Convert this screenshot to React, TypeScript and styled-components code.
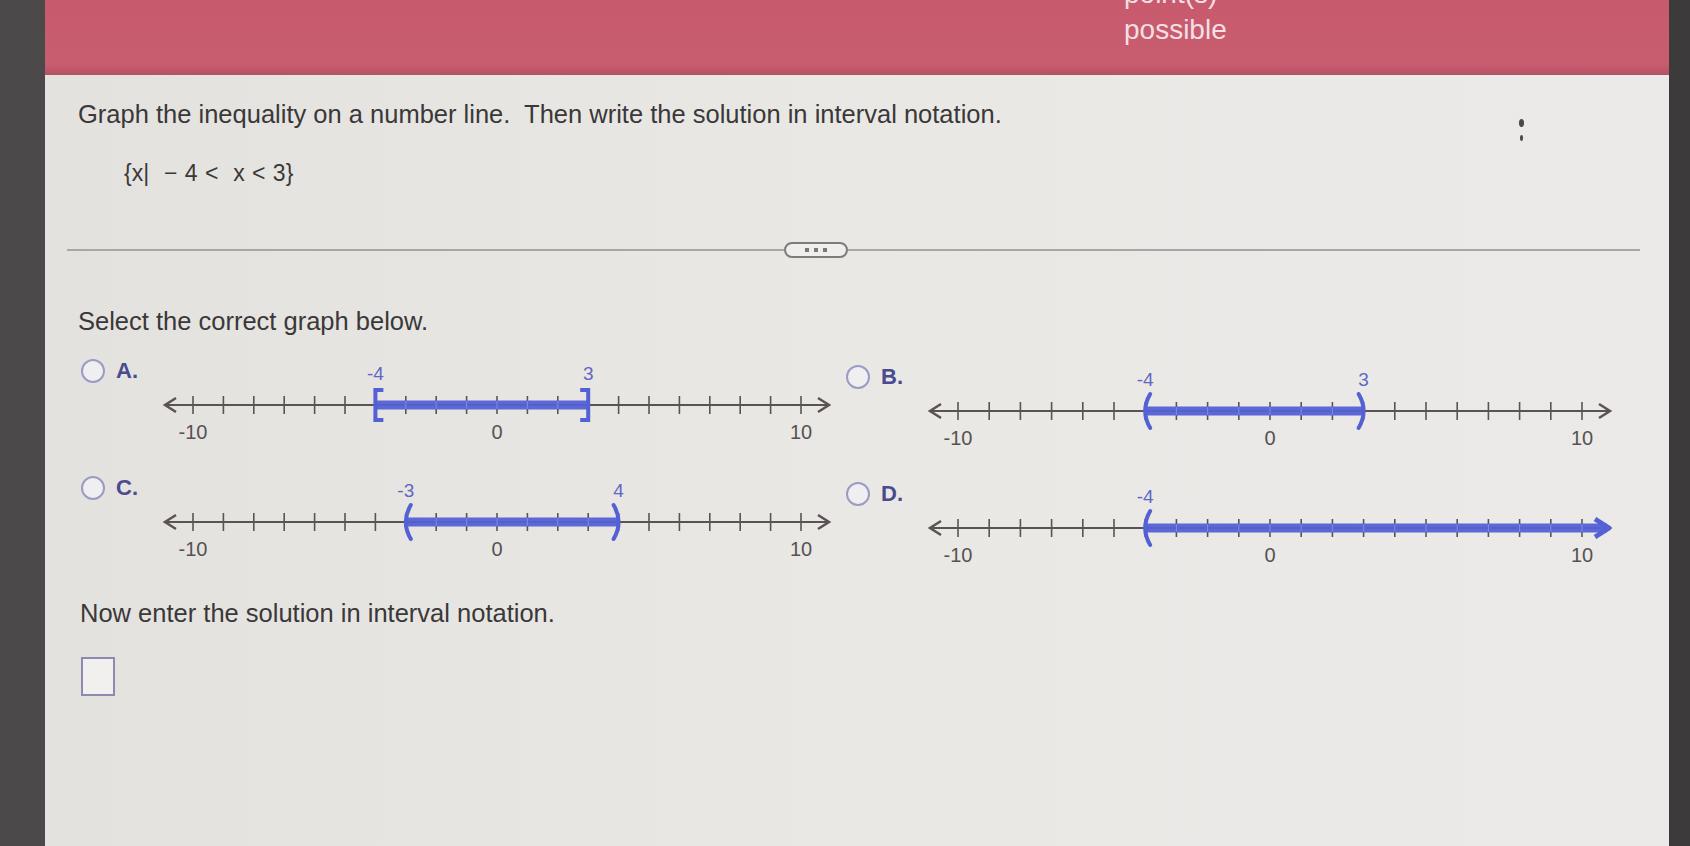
import React from "react";
import styled, { createGlobalStyle } from "styled-components";

const GlobalStyle = createGlobalStyle`
  html, body {
    margin: 0;
    padding: 0;
    background: #4a4848;
  }
  body {
    font-family: "Liberation Sans", Arial, sans-serif;
  }
`;

const Screen = styled.div`
  display: flex;
  width: 1690px;
  height: 846px;
  overflow: hidden;
`;

const Bezel = styled.div<{ $width: number; $color: string }>`
  flex: 0 0 ${(p) => p.$width}px;
  background: ${(p) => p.$color};
`;

const Main = styled.div`
  flex: 1;
  display: flex;
  flex-direction: column;
  min-width: 0;
`;

const Header = styled.header`
  flex: 0 0 75px;
  background: linear-gradient(180deg, #c75a6d 0%, #c95d70 85%, #b55163 100%);
  overflow: hidden;
  display: flex;
  padding-left: 1079px;
`;

// the header text is scrolled up, so only the bottom of "point(s)" shows
const HeaderText = styled.div`
  margin-top: -24px;
  color: #f4dfe4;
  font-size: 28px;
  line-height: 36px;
`;

const Content = styled.main`
  flex: 1;
  background: linear-gradient(90deg, #e4e2df 0%, #e9e8e5 50%, #ebeae8 100%);
  padding: 24px 29px 0 33px;
  color: #3a3838;
`;

const QuestionRow = styled.div`
  display: flex;
  justify-content: space-between;
  align-items: flex-start;
`;

const Text = styled.p`
  margin: 0;
  font-size: 25.5px;
  line-height: 30px;
  white-space: nowrap;
`;

const Dots = styled.div`
  display: flex;
  flex-direction: column;
  align-items: center;
  gap: 8px;
  margin: 20px 116px 0 0;
`;

const Dot = styled.span<{ $w: number; $h: number }>`
  width: ${(p) => p.$w}px;
  height: ${(p) => p.$h}px;
  border-radius: 50%;
  background: #4a4848;
`;

const SetNotation = styled.div`
  margin: 17px 0 0 46px;
  font-size: 23px;
  line-height: 30px;
  word-spacing: 1px;
`;

const Divider = styled.div`
  display: flex;
  align-items: center;
  height: 16px;
  margin: 54px 0 0 -11px;
`;

const Rule = styled.div<{ $width?: number }>`
  height: 2px;
  background: #a9a7a6;
  ${(p) => (p.$width ? `flex: 0 0 ${p.$width}px;` : "flex: 1;")}
`;

const MorePill = styled.button`
  flex: 0 0 64px;
  height: 16px;
  border: 2px solid #7d7b7c;
  border-radius: 8px;
  background: #efeeec;
  display: flex;
  align-items: center;
  justify-content: center;
  gap: 5px;
  padding: 0;
`;

const PillDot = styled.span`
  width: 4px;
  height: 4px;
  background: #7a7879;
`;

const SelectLabel = styled(Text)`
  margin-top: 48px;
`;

const Options = styled.div`
  display: grid;
  grid-template-columns: 765px 1fr;
  row-gap: 25px;
  margin: 23px 0 0 3px;
`;

const Option = styled.div<{ $shift: number }>`
  display: flex;
  align-items: flex-start;
  padding-top: ${(p) => p.$shift}px;
`;

const Choice = styled.label`
  flex: 0 0 81px;
  display: flex;
  align-items: center;
  gap: 11px;
  height: 24px;
`;

const Radio = styled.span`
  width: 20px;
  height: 20px;
  border-radius: 50%;
  border: 2px solid #9b9bc4;
  background: #efeff2;
`;

const Letter = styled.span`
  font-size: 22px;
  font-weight: bold;
  color: #4a4a8e;
`;

const EnterLabel = styled(Text)`
  margin: 30px 0 0 2px;
`;

const AnswerBox = styled.div`
  width: 30px;
  height: 35px;
  margin: 29px 0 0 3px;
  border: 2px solid #8c8aaf;
  background: #f1f0ee;
`;

type End = "bracket" | "paren" | "ray";

interface NumberLineProps {
  unit: number;
  from: number;
  to: number;
  left: End;
  right: End;
}

const AXIS = "#5b5353";
const BLUE = "#5361d4";

const NumberLine: React.FC<NumberLineProps> = ({ unit, from, to, left, right }) => {
  const pad = 31;
  const width = pad * 2 + unit * 20;
  const y = 46;
  const x = (v: number) => pad + (v + 10) * unit;
  const ticks = Array.from({ length: 21 }, (_, i) => i - 10);
  const endX = right === "ray" ? width - 6 : x(to);

  const endMark = (at: number, type: End, side: "l" | "r") => {
    const d = side === "l" ? 1 : -1;
    if (type === "bracket") {
      return (
        <path
          d={`M ${at + 8 * d} ${y - 15} L ${at} ${y - 15} L ${at} ${y + 15} L ${at + 8 * d} ${y + 15}`}
          fill="none"
          stroke={BLUE}
          strokeWidth={4}
        />
      );
    }
    if (type === "paren") {
      return (
        <path
          d={`M ${at + 5 * d} ${y - 17} Q ${at - 5 * d} ${y} ${at + 5 * d} ${y + 17}`}
          fill="none"
          stroke={BLUE}
          strokeWidth={4}
          strokeLinecap="round"
        />
      );
    }
    return (
      <path
        d={`M ${width - 18} ${y - 9} L ${width - 4} ${y} L ${width - 18} ${y + 9}`}
        fill="none"
        stroke={BLUE}
        strokeWidth={5}
        strokeLinejoin="round"
      />
    );
  };

  return (
    <svg width={width} height={86} viewBox={`0 0 ${width} 86`}>
      <line x1={3} y1={y} x2={width - 3} y2={y} stroke={AXIS} strokeWidth={2} />
      <path d={`M 14 ${y - 7} L 3 ${y} L 14 ${y + 7}`} fill="none" stroke={AXIS} strokeWidth={2.5} />
      <path
        d={`M ${width - 14} ${y - 7} L ${width - 3} ${y} L ${width - 14} ${y + 7}`}
        fill="none"
        stroke={AXIS}
        strokeWidth={2.5}
      />
      {ticks.map((t) => (
        <line key={t} x1={x(t)} y1={y - 9} x2={x(t)} y2={y + 9} stroke={AXIS} strokeWidth={1.6} />
      ))}
      <line x1={x(from)} y1={y} x2={endX} y2={y} stroke={BLUE} strokeWidth={9} strokeOpacity={0.95} />
      {ticks
        .filter((t) => t > from && (right === "ray" || t < to))
        .map((t) => (
          <line key={`b${t}`} x1={x(t)} y1={y - 4} x2={x(t)} y2={y + 4} stroke="#7b86e0" strokeWidth={1.2} />
        ))}
      {endMark(x(from), left, "l")}
      {endMark(endX, right, "r")}
      <g fontFamily="'Liberation Sans', Arial, sans-serif" fontSize={19} textAnchor="middle" fill="#6068c4">
        <text x={x(from)} y={21}>
          {from}
        </text>
        {right !== "ray" && (
          <text x={x(to)} y={21}>
            {to}
          </text>
        )}
      </g>
      <g fontFamily="'Liberation Sans', Arial, sans-serif" fontSize={20} textAnchor="middle" fill="#555253">
        <text x={x(-10)} y={80}>
          -10
        </text>
        <text x={x(0)} y={80}>
          0
        </text>
        <text x={x(10)} y={80}>
          10
        </text>
      </g>
    </svg>
  );
};

const options: Array<{ letter: string; unit: number; shift: number } & Omit<NumberLineProps, "unit">> = [
  { letter: "A", unit: 30.4, shift: 0, from: -4, to: 3, left: "bracket", right: "bracket" },
  { letter: "B", unit: 31.2, shift: 6, from: -4, to: 3, left: "paren", right: "paren" },
  { letter: "C", unit: 30.4, shift: 0, from: -3, to: 4, left: "paren", right: "paren" },
  { letter: "D", unit: 31.2, shift: 6, from: -4, to: 10, left: "paren", right: "ray" },
];

export default function App() {
  return (
    <>
      <GlobalStyle />
      <Screen>
        <Bezel $width={45} $color="#4b4949" />
        <Main>
          <Header>
            <HeaderText>
              point(s)
              <br />
              possible
            </HeaderText>
          </Header>
          <Content>
            <QuestionRow>
              <Text>Graph the inequality on a number line.&nbsp; Then write the solution in interval notation.</Text>
              <Dots>
                <Dot $w={5} $h={8} />
                <Dot $w={3} $h={6} />
              </Dots>
            </QuestionRow>
            <SetNotation>
              {"{x|"}&nbsp; − 4 &lt;&nbsp; x &lt; 3{"}"}
            </SetNotation>
            <Divider>
              <Rule $width={717} />
              <MorePill aria-label="more">
                <PillDot />
                <PillDot />
                <PillDot />
              </MorePill>
              <Rule />
            </Divider>
            <SelectLabel>Select the correct graph below.</SelectLabel>
            <Options>
              {options.map((o) => (
                <Option key={o.letter} $shift={o.shift}>
                  <Choice>
                    <Radio />
                    <Letter>{o.letter}.</Letter>
                  </Choice>
                  <NumberLine unit={o.unit} from={o.from} to={o.to} left={o.left} right={o.right} />
                </Option>
              ))}
            </Options>
            <EnterLabel>Now enter the solution in interval notation.</EnterLabel>
            <AnswerBox />
          </Content>
        </Main>
        <Bezel $width={21} $color="#3c3a3b" />
      </Screen>
    </>
  );
}
